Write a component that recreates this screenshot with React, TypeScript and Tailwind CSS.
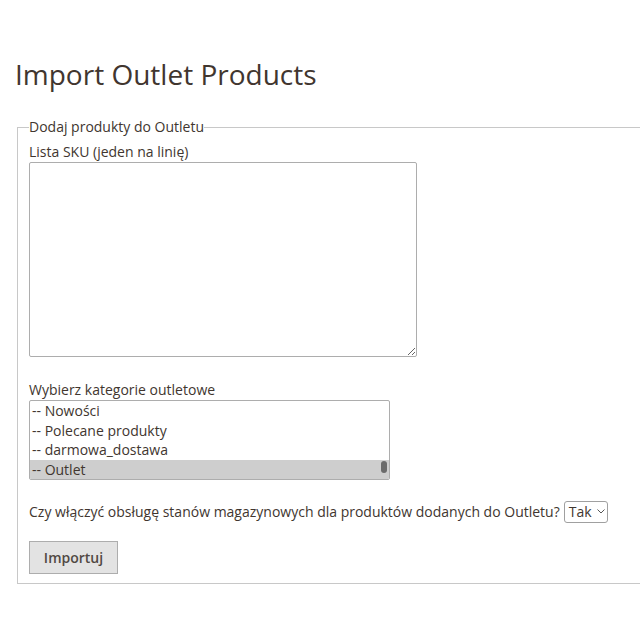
import React from "react";

export default function App() {
  const options = ["-- Nowości", "-- Polecane produkty", "-- darmowa_dostawa", "-- Outlet"];
  return (
    <div className="w-[640px] h-[640px] overflow-hidden bg-white font-['Open_Sans',sans-serif] text-[#41362f]">
      <h1 className="pt-[55px] pl-[15px] text-[28px] leading-[38px] font-normal">Import Outlet Products</h1>
      <fieldset className="mt-[24px] ml-[17px] w-[700px] border border-[#c8c8c8] pl-[11px] pb-[9px]">
        <legend className="text-[14px] leading-[20px]">Dodaj produkty do Outletu</legend>
        <label className="block mt-[5px] text-[14px] leading-[20px]">Lista SKU (jeden na linię)</label>
        <textarea className="block w-[388px] h-[195px] border border-[#adadad] rounded-[2px] bg-white resize" />
        <label className="block mt-[23px] text-[14px] leading-[20px]">Wybierz kategorie outletowe</label>
        <div className="relative w-[361px] h-[80px] border border-[#adadad] rounded-[2px] overflow-hidden">
          {options.map((o, i) => (
            <div
              key={o}
              className={
                i === 3
                  ? "h-[19.5px] leading-[19.5px] pl-[2px] text-[14px] bg-[#cecece]"
                  : "h-[19.5px] leading-[19.5px] pl-[2px] text-[14px]"
              }
            >
              {o}
            </div>
          ))}
          <div className="absolute right-[2px] bottom-[6px] w-[6px] h-[12px] rounded-full bg-[#6b6b6b]" />
        </div>
        <div className="mt-[21px] h-[21px] flex items-center text-[14px] leading-[20px]">
          <span>Czy włączyć obsługę stanów magazynowych dla produktów dodanych do Outletu?</span>
          <div className="ml-[4px] h-[22px] w-[44px] border border-[#a0a0a0] rounded-[3px] flex items-center pl-[4px]">
            <span className="text-[14px]">Tak</span>
            <svg className="ml-[5px]" width="8" height="5" viewBox="0 0 8 5" fill="none">
              <path d="M0.5 0.5 L4 4 L7.5 0.5" stroke="#555" strokeWidth="1" />
            </svg>
          </div>
        </div>
        <button className="block mt-[19px] w-[89px] h-[33px] border border-[#adadad] bg-[#e3e3e3] text-[14px] font-semibold text-[#514943]">
          Importuj
        </button>
      </fieldset>
    </div>
  );
}
